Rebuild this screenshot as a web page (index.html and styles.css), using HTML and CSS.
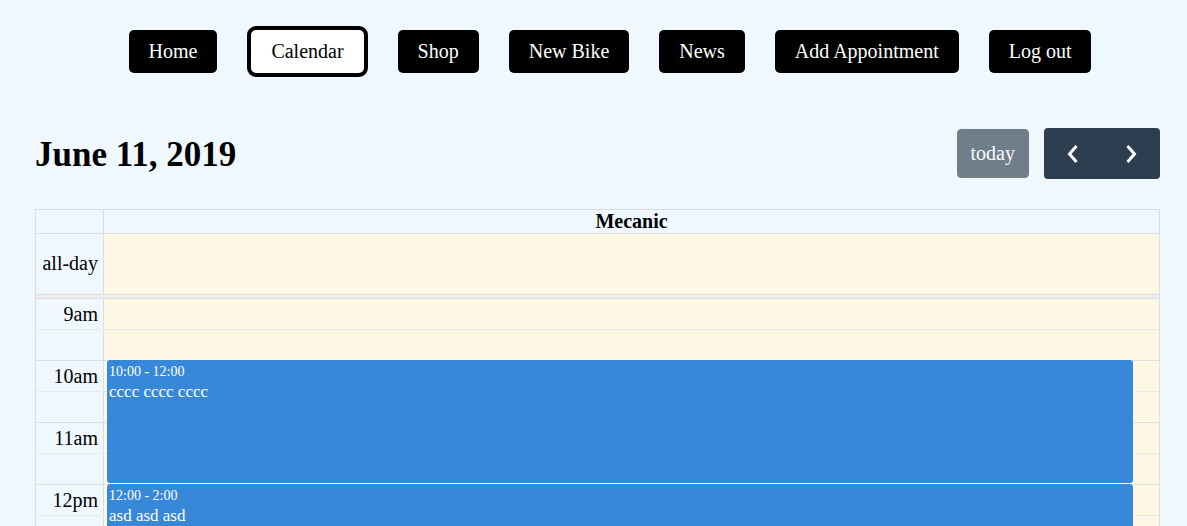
FILE: index.html
```html
<!DOCTYPE html>
<html lang="en">
<head>
<meta charset="utf-8">
<title>Calendar</title>
<link rel="stylesheet" href="styles.css">
</head>
<body>
<nav class="topnav">
  <a class="nav-btn">Home</a>
  <a class="nav-btn active">Calendar</a>
  <a class="nav-btn">Shop</a>
  <a class="nav-btn">New Bike</a>
  <a class="nav-btn">News</a>
  <a class="nav-btn">Add Appointment</a>
  <a class="nav-btn">Log out</a>
</nav>
<main class="calendar">
  <div class="toolbar">
    <h2 class="title">June 11, 2019</h2>
    <div class="toolbar-right">
      <button class="btn btn-today" disabled>today</button>
      <div class="btn-group">
        <button class="btn-icon" aria-label="prev">
          <svg width="12" height="20" viewBox="0 0 12 20"><polyline points="9.5,2 2.5,10 9.5,18" fill="none" stroke="#fff" stroke-width="3"/></svg>
        </button>
        <button class="btn-icon" aria-label="next">
          <svg width="12" height="20" viewBox="0 0 12 20"><polyline points="2.5,2 9.5,10 2.5,18" fill="none" stroke="#fff" stroke-width="3"/></svg>
        </button>
      </div>
    </div>
  </div>
  <div class="grid">
    <div class="row head">
      <div class="axis"></div>
      <div class="col-head">Mecanic</div>
    </div>
    <div class="row allday">
      <div class="axis">all-day</div>
      <div class="day-cell"></div>
    </div>
    <div class="divider"></div>
    <div class="timegrid">
      <div class="row slot major"><div class="axis">9am</div><div class="day-cell"></div></div>
      <div class="row slot minor"><div class="axis"></div><div class="day-cell"></div></div>
      <div class="row slot major"><div class="axis">10am</div><div class="day-cell"></div></div>
      <div class="row slot minor"><div class="axis"></div><div class="day-cell"></div></div>
      <div class="row slot major"><div class="axis">11am</div><div class="day-cell"></div></div>
      <div class="row slot minor"><div class="axis"></div><div class="day-cell"></div></div>
      <div class="row slot major"><div class="axis">12pm</div><div class="day-cell"></div></div>
      <div class="row slot minor"><div class="axis"></div><div class="day-cell"></div></div>
      <div class="row slot major"><div class="axis">1pm</div><div class="day-cell"></div></div>
      <div class="row slot minor"><div class="axis"></div><div class="day-cell"></div></div>
      <div class="events">
        <div class="event ev-1">
          <div class="ev-time">10:00 - 12:00</div>
          <div class="ev-title">cccc cccc cccc</div>
        </div>
        <div class="event ev-2 inset">
          <div class="ev-time">12:00 - 2:00</div>
          <div class="ev-title">asd asd asd</div>
        </div>
      </div>
    </div>
  </div>
</main>
</body>
</html>
```
FILE: styles.css
```css
html, body {
  margin: 0;
  padding: 0;
}
body {
  background: #f0f8ff;
  font-family: "Liberation Serif", "Times New Roman", serif;
  font-size: 20px;
  color: #000;
  overflow: hidden;
}

/* top navigation */
.topnav {
  display: flex;
  justify-content: center;
  align-items: center;
  gap: 30px;
  padding: 26px 0 0 33px;
}
.nav-btn {
  display: block;
  background: #000;
  color: #fff;
  padding: 10px 20px;
  line-height: 23px;
  border-radius: 5px;
  text-decoration: none;
  cursor: pointer;
}
.nav-btn.active {
  background: #fff;
  color: #000;
  border: 4px solid #000;
  border-radius: 9px;
}

/* calendar */
.calendar {
  padding: 0 27px 0 35px;
  margin-top: 51px;
}
.toolbar {
  display: flex;
  justify-content: space-between;
  align-items: center;
  height: 51px;
  margin-bottom: 30px;
}
.title {
  margin: 0;
  font-size: 35px;
  font-weight: bold;
  line-height: 40px;
  position: relative;
  top: 1px;
}
.toolbar-right {
  display: flex;
  align-items: center;
  gap: 15px;
}
.btn {
  font-family: inherit;
  font-size: 20px;
  color: #fff;
  background: #2c3e50;
  border: 1px solid #2c3e50;
  border-radius: 4px;
  padding: 0 13px;
}
.btn-today {
  height: 49px;
  opacity: 0.65;
}
.btn-group {
  display: flex;
  background: #2c3e50;
  border-radius: 4px;
}
.btn-icon {
  width: 58px;
  height: 51px;
  display: flex;
  align-items: center;
  justify-content: center;
  padding: 0;
  border: none;
  background: transparent;
}

.grid {
  border: 1px solid #ddd;
  border-bottom: none;
}
.row {
  display: flex;
}
.axis {
  flex: none;
  width: 62px;
  border-right: 1px solid #ddd;
  padding: 0 5px 0 0;
  display: flex;
  align-items: center;
  justify-content: flex-end;
}
.head {
  height: 23px;
  border-bottom: 1px solid #ddd;
}
.col-head {
  flex: 1;
  text-align: center;
  font-weight: bold;
  line-height: 23px;
}
.allday {
  height: 60px;
}
.allday .axis {
  padding-bottom: 2px;
}
.day-cell {
  flex: 1;
  background: #fcf8e3;
}
.divider {
  height: 3px;
  background: #eee;
  border-top: 1px solid #ddd;
  border-bottom: 1px solid #ddd;
}
.timegrid {
  position: relative;
}
.slot {
  height: 30px;
}
.slot.major {
  border-bottom: 1px dotted #ddd;
}
.slot.minor {
  border-bottom: 1px solid #ddd;
}
.events {
  position: absolute;
  top: 0;
  bottom: 0;
  left: 68px;
  right: 0;
}
.event {
  position: absolute;
  left: 3px;
  right: 26px;
  background: #3788d8;
  color: #fff;
  border-radius: 3px;
  padding: 2px 2px 0;
  overflow: hidden;
}
.ev-1 {
  top: 61px;
  height: 121px;
}
.ev-2 {
  top: 185px;
  height: 121px;
}
.inset {
  box-shadow: 0 0 0 1px #fff;
}
.ev-time {
  font-size: 14px;
  line-height: 19px;
}
.ev-title {
  font-size: 17px;
  line-height: 22px;
}
```
